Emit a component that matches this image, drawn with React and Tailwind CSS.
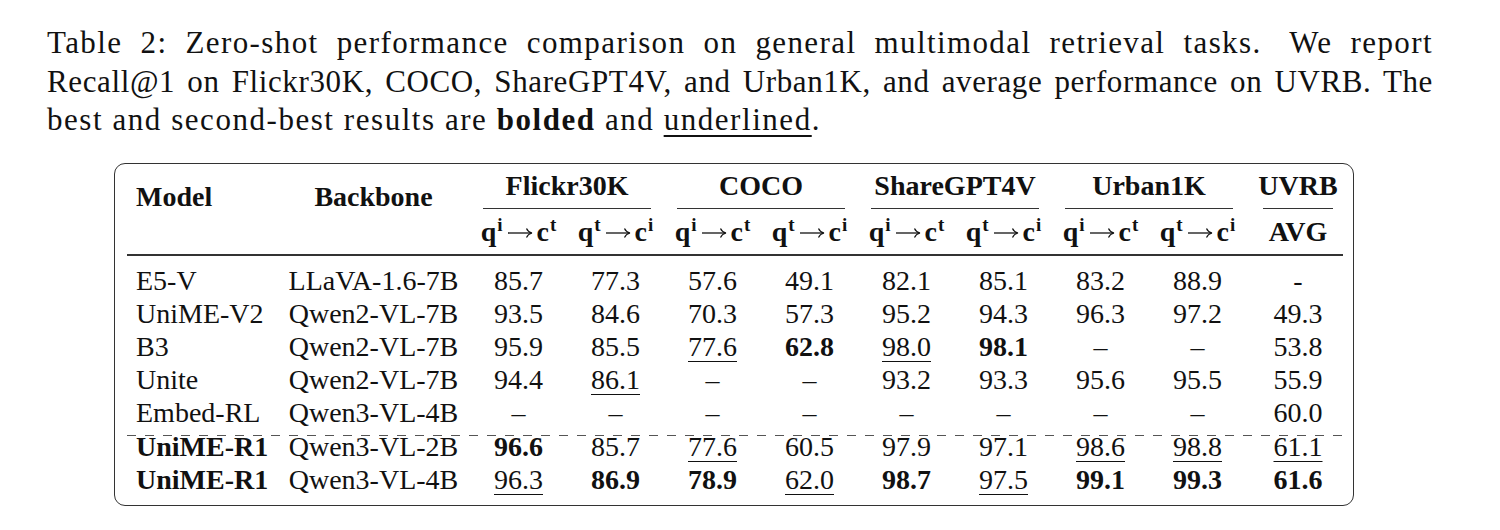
import React from 'react';

const groups = ['Flickr30K', 'COCO', 'ShareGPT4V', 'Urban1K'];

// '*' = best (bold), '_' = second best (underlined)
const rows = [
    ['E5-V', 'LLaVA-1.6-7B', '85.7', '77.3', '57.6', '49.1', '82.1', '85.1', '83.2', '88.9', '-'],
    ['UniME-V2', 'Qwen2-VL-7B', '93.5', '84.6', '70.3', '57.3', '95.2', '94.3', '96.3', '97.2', '49.3'],
    ['B3', 'Qwen2-VL-7B', '95.9', '85.5', '_77.6', '*62.8', '_98.0', '*98.1', '–', '–', '53.8'],
    ['Unite', 'Qwen2-VL-7B', '94.4', '_86.1', '–', '–', '93.2', '93.3', '95.6', '95.5', '55.9'],
    ['Embed-RL', 'Qwen3-VL-4B', '–', '–', '–', '–', '–', '–', '–', '–', '60.0'],
];

const ours = [
    ['UniME-R1', 'Qwen3-VL-2B', '*96.6', '85.7', '_77.6', '60.5', '97.9', '97.1', '_98.6', '_98.8', '_61.1'],
    ['UniME-R1', 'Qwen3-VL-4B', '_96.3', '*86.9', '*78.9', '_62.0', '*98.7', '_97.5', '*99.1', '*99.3', '*61.6'],
];

const Score = ({ value }) => {
    if (value.startsWith('*')) return <span className="font-bold">{value.slice(1)}</span>;
    if (value.startsWith('_')) {
        return <span className="underline decoration-[1.3px] underline-offset-[5px]">{value.slice(1)}</span>;
    }
    return <span>{value}</span>;
};

// thin TeX-like right arrow
const Arrow = () => (
    <svg width="26" height="12" viewBox="0 0 26 12" className="inline-block mx-[4px] align-[2px]">
        <path d="M1 6H24.5" stroke="#111" strokeWidth="1.3" fill="none" />
        <path d="M19.5 1.5C20.5 4 22.5 5.4 25 6C22.5 6.6 20.5 8 19.5 10.5" stroke="#111" strokeWidth="1.2" fill="none" />
    </svg>
);

// bold q^a -> c^b header cell
const Dir = ({ a, b }) => (
    <span className="font-bold whitespace-nowrap">
        q<span className="text-[19px] leading-none align-[10px] ml-[1px]">{a}</span>
        <Arrow />
        c<span className="text-[19px] leading-none align-[10px] ml-[1px]">{b}</span>
    </span>
);

const cols = 'grid grid-cols-[154px_189px_repeat(8,97px)_104px]';

const Row = ({ cells, boldModel }) => (
    <div className={`${cols} h-[33px] leading-[21px]`}>
        <div className={`pl-[9px] whitespace-nowrap ${boldModel ? 'font-bold' : ''}`}>{cells[0]}</div>
        <div className="text-center whitespace-nowrap pr-[4px]">{cells[1]}</div>
        {cells.slice(2).map((v, i) => (
            <div key={i} className="text-center">
                <Score value={v} />
            </div>
        ))}
    </div>
);

const App = () => {
    return (
        <div className="w-[1500px] min-h-[530px] bg-white text-[#111] font-['Liberation_Serif',serif]">
            <div className="pl-[47px] pt-[24px]">
                <div className="w-[1386px] text-[31px] leading-[38.5px]">
                    <p className="text-justify [text-align-last:justify] tracking-[0.045em]">
                        Table 2: Zero-shot performance comparison on general multimodal retrieval tasks.<span className="ml-[10px]" /> We report
                    </p>
                    <p className="text-justify [text-align-last:justify] tracking-[0.02em]">
                        Recall@1 on Flickr30K, COCO, ShareGPT4V, and Urban1K, and average performance on UVRB. The
                    </p>
                    <p className="tracking-[0.05em]">
                        best and second-best results are <span className="font-bold">bolded</span> and{' '}
                        <span className="underline decoration-[1.5px] underline-offset-[5px]">underlined</span>.
                    </p>
                </div>

                <div className="mt-[23px] ml-[67px] w-[1240px] h-[343px] border-[1.5px] border-[#333] rounded-[11px] pl-[12px] pr-[2px] text-[28px]">
                    {/* header */}
                    <div className={`${cols} pt-[5.5px] grid-rows-[34px_12px_34px] leading-[34px] font-bold`}>
                        <div className="row-span-3 pl-[9px] pt-[11px]">Model</div>
                        <div className="row-span-3 text-center pt-[11px] pr-[4px]">Backbone</div>
                        {groups.map((g) => (
                            <div key={g} className="col-span-2 text-center">{g}</div>
                        ))}
                        <div className="text-center">UVRB</div>

                        {groups.map((g) => (
                            <div key={g} className="col-span-2 mx-[13px] mt-[5px] h-px bg-[#333]" />
                        ))}
                        <div className="mx-[17px] mt-[5px] h-px bg-[#333]" />

                        {groups.map((g) => (
                            <React.Fragment key={g}>
                                <div className="text-center"><Dir a="i" b="t" /></div>
                                <div className="text-center"><Dir a="t" b="i" /></div>
                            </React.Fragment>
                        ))}
                        <div className="text-center">AVG</div>
                    </div>

                    <div className="mt-[5px] mr-[8px] h-[1.5px] bg-[#333]" />

                    <div className="mt-[14.5px]">
                        {rows.map((r) => (
                            <Row key={r[0]} cells={r} />
                        ))}
                    </div>

                    <div className="mr-[8px] h-px bg-[image:repeating-linear-gradient(to_right,#555_0_9px,transparent_9px_18px)]" />

                    {ours.map((r) => (
                        <Row key={r[1]} cells={r} boldModel />
                    ))}
                </div>
            </div>
        </div>
    );
};

export default App;
